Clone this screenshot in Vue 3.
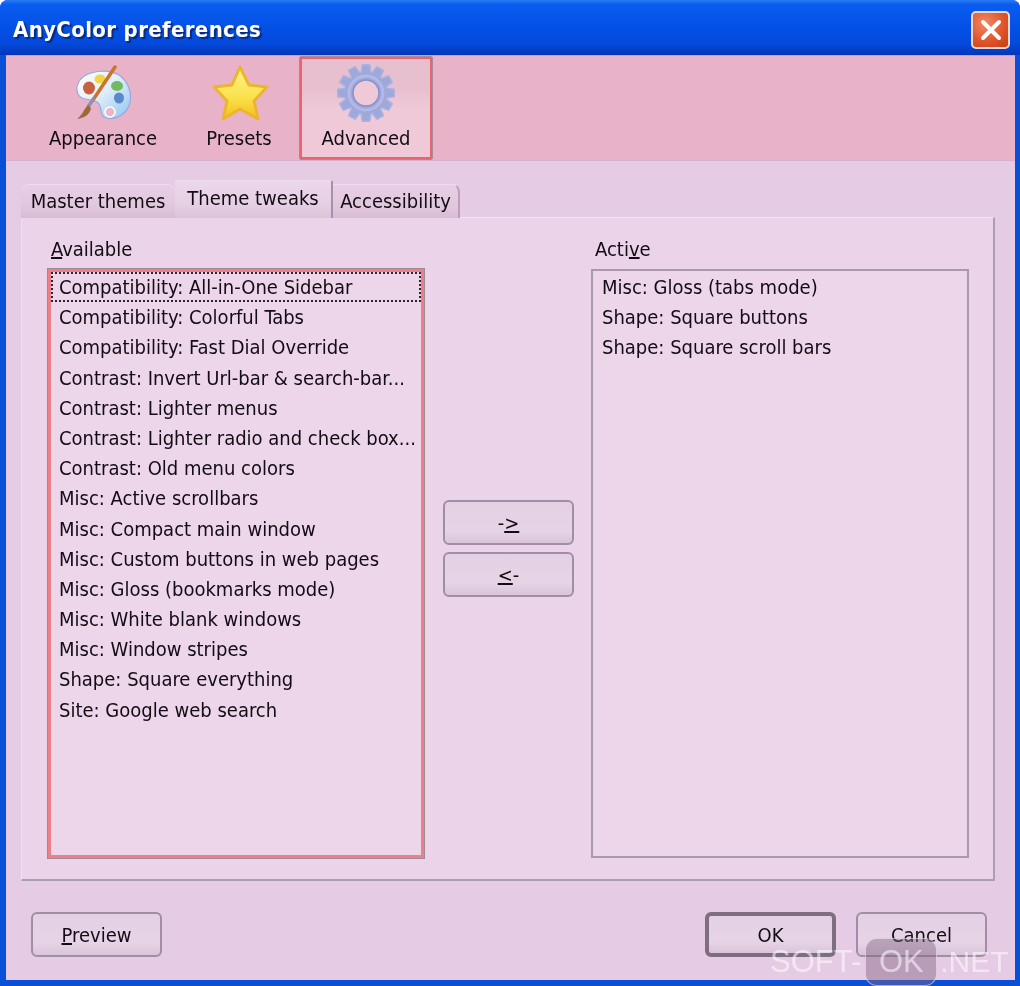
<script setup>
const available = [
  'Compatibility: All-in-One Sidebar',
  'Compatibility: Colorful Tabs',
  'Compatibility: Fast Dial Override',
  'Contrast: Invert Url-bar & search-bar...',
  'Contrast: Lighter menus',
  'Contrast: Lighter radio and check box...',
  'Contrast: Old menu colors',
  'Misc: Active scrollbars',
  'Misc: Compact main window',
  'Misc: Custom buttons in web pages',
  'Misc: Gloss (bookmarks mode)',
  'Misc: White blank windows',
  'Misc: Window stripes',
  'Shape: Square everything',
  'Site: Google web search'
]
const active = ['Misc: Gloss (tabs mode)', 'Shape: Square buttons', 'Shape: Square scroll bars']

function gearPath(cx, cy, outer, root, teeth) {
  const step = (Math.PI * 2) / teeth
  const pts = []
  for (let i = 0; i < teeth; i++) {
    const a = i * step - Math.PI / 2
    const o = [[root, -0.5], [outer, -0.3], [outer, 0.3], [root, 0.5]]
    for (const [r, k] of o) {
      const t = a + k * step * 0.85
      pts.push(`${(cx + r * Math.cos(t)).toFixed(2)} ${(cy + r * Math.sin(t)).toFixed(2)}`)
    }
  }
  return 'M' + pts.join('L') + 'Z'
}
const gear = gearPath(30, 30, 28.5, 21.5, 12)
</script>

<template>
  <div class="window">
    <header class="titlebar">
      <span class="title">AnyColor preferences</span>
      <button class="close" aria-label="Close">
        <svg width="24" height="24" viewBox="0 0 24 24"><path d="M4 4L20 20M20 4L4 20" stroke="#fff" stroke-width="4" stroke-linecap="round" /></svg>
      </button>
    </header>

    <main class="client">
      <nav class="toolbar">
        <div class="tool tool-appearance">
          <svg width="60" height="60" viewBox="0 0 60 60">
            <defs>
              <linearGradient id="pal" x1="0" y1="0" x2="1" y2="1"><stop offset="0" stop-color="#fff" /><stop offset="0.45" stop-color="#e2f0fb" /><stop offset="1" stop-color="#8fc4ee" /></linearGradient>
            </defs>
            <path d="M7 17C14 8 34 5 46 12C56 19 60 32 56 43C51 54 38 58 31 54C26 50 30 43 24 39C17 35 8 38 5 31C3 26 4 21 7 17Z" fill="url(#pal)" stroke="#9aa8e0" stroke-width="1.2" />
            <ellipse cx="16" cy="25" rx="6" ry="6.5" fill="#c8603f" />
            <ellipse cx="27" cy="16" rx="5.5" ry="4.5" fill="#f1d44a" />
            <ellipse cx="44" cy="23" rx="6" ry="5" fill="#74b862" />
            <ellipse cx="46" cy="35" rx="5" ry="5.5" fill="#5a88cc" />
            <circle cx="37" cy="49" r="5" fill="#eab4cb" stroke="#fff" stroke-width="1.6" />
            <path d="M42 4L20 37" stroke="#c8752a" stroke-width="3.5" stroke-linecap="round" />
            <path d="M21 35L15 44" stroke="#8f8fb4" stroke-width="3.5" />
            <path d="M15 42C11 46 10 51 4 56C11 55 17 52 18 45Z" fill="#9a6a3a" />
          </svg>
          <span>Appearance</span>
        </div>
        <div class="tool tool-presets">
          <svg width="60" height="60" viewBox="0 0 60 60">
            <defs>
              <linearGradient id="star" x1="0" y1="0" x2="0" y2="1"><stop offset="0" stop-color="#fff48c" /><stop offset="0.6" stop-color="#fbe04a" /><stop offset="1" stop-color="#f2bf1c" /></linearGradient>
            </defs>
            <path d="M31 4L40 22L58 24L45 38L49 56L31 46L14 56L18 38L5 24L23 22Z" fill="url(#star)" stroke="#edb52e" stroke-width="3" stroke-linejoin="round" />
          </svg>
          <span>Presets</span>
        </div>
        <div class="tool tool-advanced">
          <svg width="60" height="60" viewBox="0 0 60 60">
            <path :d="gear" fill="#9ea8da" stroke="#aab3e2" stroke-width="1.5" stroke-linejoin="round" />
            <circle cx="30" cy="30" r="17" fill="none" stroke="#b2b9e6" stroke-width="3" />
            <circle cx="30" cy="30" r="13" fill="#efc9d7" stroke="#8591cc" stroke-width="1.5" />
          </svg>
          <span>Advanced</span>
        </div>
      </nav>

      <section class="content">
        <div class="tabs">
          <div class="tab tab-first">Master themes</div>
          <div class="tab tab-on">Theme tweaks</div>
          <div class="tab tab-last">Accessibility</div>
        </div>
        <div class="panel">
          <div class="col col-left">
            <label class="cap"><u>A</u>vailable</label>
            <ul class="list list-focus">
              <li v-for="(t, i) in available" :key="t" :class="{ dotted: i === 0 }">{{ t }}</li>
            </ul>
          </div>
          <div class="mid">
            <button class="btn"><span>-<u>&gt;</u></span></button>
            <button class="btn"><span><u>&lt;</u>-</span></button>
          </div>
          <div class="col col-right">
            <label class="cap">Acti<u>v</u>e</label>
            <ul class="list">
              <li v-for="t in active" :key="t">{{ t }}</li>
            </ul>
          </div>
        </div>
        <footer class="foot">
          <button class="btn"><span><u>P</u>review</span></button>
          <div class="foot-right">
            <button class="btn btn-default">OK</button>
            <button class="btn">Cancel</button>
          </div>
        </footer>
      </section>
    </main>

    <div class="mark">
      <span>SOFT-</span><span class="mark-box">OK</span><span class="mark-net">.NET</span>
    </div>
  </div>
</template>

<style scoped>
.window {
  position: relative;
  width: 1020px;
  height: 986px;
  display: flex;
  flex-direction: column;
  overflow: hidden;
  background: #0a4fd8;
  border-radius: 8px 8px 0 0;
  font-family: "DejaVu Sans Condensed", "DejaVu Sans", sans-serif;
  font-stretch: condensed;
  font-size: 20px;
  color: #120c14;
  filter: blur(0.45px);
}
.titlebar {
  height: 55px;
  flex: none;
  box-sizing: border-box;
  display: flex;
  align-items: center;
  justify-content: space-between;
  padding: 7px 10px 3px 13px;
  background: linear-gradient(180deg, #2a7cf2 0, #0a5cf0 8%, #0450e6 50%, #0449dc 80%, #0336b8 100%);
}
.title {
  color: #fff;
  font-size: 22px;
  font-weight: 700;
  letter-spacing: 0.35px;
  text-shadow: 2px 2px 1px #0a2a80;
}
.close {
  width: 39px;
  height: 38px;
  padding: 0;
  display: flex;
  align-items: center;
  justify-content: center;
  border: 2px solid #f0d8d0;
  border-radius: 5px;
  background: radial-gradient(circle at 35% 30%, #f08a68, #e0552c 55%, #c83c10);
}
.client {
  flex: 1;
  margin: 0 5px 6px 6px;
  display: flex;
  flex-direction: column;
  background: #e6cbe4;
  min-height: 0;
}
.toolbar {
  height: 106px;
  flex: none;
  box-sizing: border-box;
  display: flex;
  background: #e8b3c8;
  border-bottom: 1px solid #d9b0cc;
  border-top: 1px solid #c8a0c8;
}
.tool {
  display: flex;
  flex-direction: column;
  align-items: center;
  box-sizing: border-box;
  height: 104px;
  padding-top: 7px;
  line-height: 30px;
}
.tool svg { display: block; margin-bottom: 0; }
.tool-appearance { width: 134px; margin-left: 30px; }
.tool-presets { width: 134px; margin-left: 2px; padding-top: 7px; }
.tool-advanced {
  width: 134px;
  margin-left: -7px;
  border: 3px solid #e8656e;
  border-radius: 3px;
  outline: 1px solid #a88a9c;
  outline-offset: -1px;
  background: linear-gradient(180deg, #e6c0ce 0, #e8bfcf 30%, #efc9d7 50%, #efc9d7 100%);
  padding-top: 4px;
}
.content {
  flex: 1;
  display: flex;
  flex-direction: column;
  min-height: 0;
  padding: 19px 20px 0 15px;
}
.tabs {
  display: flex;
  height: 38px;
  align-items: flex-end;
  flex: none;
  position: relative;
  z-index: 1;
  margin-bottom: -1px;
}
.tab {
  height: 34px;
  box-sizing: border-box;
  line-height: 33px;
  text-align: center;
  border-radius: 8px 8px 0 0;
  background: linear-gradient(180deg, #e9cfe6 0, #e2c8de 60%, #d8bcd6 100%);
  border-top: 1px solid #f0dcee;
}
.tab-first { width: 154px; }
.tab-on {
  width: 158px;
  height: 38px;
  line-height: 34px;
  background: linear-gradient(180deg, #ecd8ea 0, #e6d0e4 60%, #dcc4da 100%);
  border-radius: 2px 2px 0 0;
  border-right: 2px solid #a890aa;
}
.tab-last {
  width: 127px;
  border-radius: 0 8px 0 0;
  border-right: 2px solid #b9a0b8;
}
.panel {
  height: 664px;
  flex: none;
  box-sizing: border-box;
  display: grid;
  grid-template-columns: 376px 167px 378px;
  padding: 16px 0 21px 26px;
  background: #ebd3e9;
  border-top: 1px solid #f2e4f0;
  border-left: 1px solid #f0e0ee;
  border-right: 2px solid #a8a0ac;
  border-bottom: 2px solid #a8a0ac;
}
.col { display: flex; flex-direction: column; min-height: 0; }
.cap { height: 35px; line-height: 30px; flex: none; padding-left: 3px; }
.col-right .cap { padding-left: 4px; }
.list {
  flex: 1;
  margin: 0;
  padding: 1px 0 0;
  list-style: none;
  box-sizing: border-box;
  border: 2px solid #a89aae;
  background: #edd5ea;
  min-height: 0;
}
.list-focus {
  border: 3px solid #ec7f88;
  outline: 1px solid #9c8a98;
  padding-top: 0;
}
.list li {
  height: 30.2px;
  line-height: 30px;
  padding-left: 9px;
  white-space: nowrap;
}
.list-focus li { padding-left: 8px; }
.list .dotted {
  outline: 2px dotted #2a2430;
  outline-offset: -2px;
}
.mid {
  display: flex;
  flex-direction: column;
  align-items: center;
  gap: 7px;
  padding: 266px 0 0 2px;
}
.btn {
  width: 131px;
  height: 45px;
  padding: 0;
  font: inherit;
  color: inherit;
  border: 2px solid #a08ea6;
  border-radius: 6px;
  background: linear-gradient(180deg, #e4d0e4 0, #e6d4e6 70%, #dac4da 100%);
}
.foot {
  flex: 1;
  display: flex;
  justify-content: space-between;
  padding: 31px 8px 0 10px;
  box-sizing: border-box;
}
.foot-right { display: flex; gap: 20px; }
.btn-default { border: 4px solid #7d6e82; }
.mark {
  position: absolute;
  left: 770px;
  top: 938px;
  height: 48px;
  display: flex;
  align-items: center;
  font-family: "Liberation Sans", sans-serif;
  font-size: 31px;
  color: rgba(255, 255, 255, 0.55);
}
.mark-box {
  width: 72px;
  height: 48px;
  margin: 0 3px 0 4px;
  text-align: center;
  line-height: 46px;
  background: rgba(130, 100, 130, 0.45);
  border-radius: 12px;
  border: 1px solid rgba(255, 255, 255, 0.5);
  box-sizing: border-box;
}
.mark-net { font-size: 30px; }
</style>
